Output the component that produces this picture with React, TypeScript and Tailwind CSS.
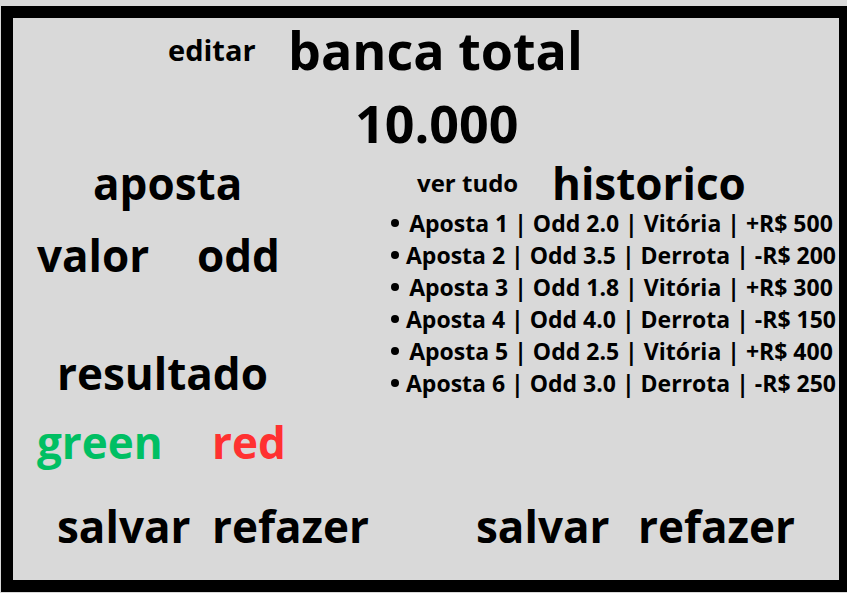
const bets = [
  'Aposta 1 | Odd 2.0 | Vitória | +R$ 500',
  'Aposta 2 | Odd 3.5 | Derrota | -R$ 200',
  'Aposta 3 | Odd 1.8 | Vitória | +R$ 300',
  'Aposta 4 | Odd 4.0 | Derrota | -R$ 150',
  'Aposta 5 | Odd 2.5 | Vitória | +R$ 400',
  'Aposta 6 | Odd 3.0 | Derrota | -R$ 250',
];

export default function App() {
  return (
    <div className="flex min-h-screen flex-col bg-[#d9d9d9] pt-1.5 pb-px pl-px font-['Open_Sans',sans-serif] font-bold text-black">
      <main className="flex flex-1 flex-col border-12 border-r-8 border-black">
        <header className="flex flex-col">
          <div className="flex items-center pl-[155px]">
            <button className="w-[120px] text-left text-[29px] leading-[60px]">editar</button>
            <h1 className="text-[52px] leading-[64px]">banca total</h1>
          </div>
          <p className="pt-1 pl-[342px] text-[52px] leading-[73px]">10.000</p>
        </header>
        <div className="flex">
          <section className="w-[372px] shrink-0">
            <h2 className="pl-20 text-[44px] leading-[48px]">aposta</h2>
            <div className="flex pt-6 pl-6 text-[44px] leading-[48px]">
              <span className="w-40">valor</span>
              <span>odd</span>
            </div>
            <h2 className="pt-[70px] pl-11 text-[44px] leading-[48px]">resultado</h2>
            <div className="flex pt-[21px] pl-6 text-[44px] leading-[48px]">
              <button className="w-[175px] text-left text-[#00bf63]">green</button>
              <button className="text-[#ff3131]">red</button>
            </div>
          </section>
          <section className="min-w-0 flex-1">
            <div className="flex items-center pl-8">
              <button className="w-[135px] text-left text-2xl">ver tudo</button>
              <h2 className="text-[44px] leading-[48px]">historico</h2>
            </div>
            <ul className="text-center text-[23px] leading-8 whitespace-nowrap">
              {bets.map((bet) => (
                <li key={bet} className="flex items-center gap-1">
                  <span aria-hidden="true" className="ml-1.5 size-2 shrink-0 rounded-full bg-black" />
                  <span className="flex-1">{bet}</span>
                </li>
              ))}
            </ul>
          </section>
        </div>
        <footer className="flex pt-9 pl-11 text-[44px] leading-[48px]">
          <button className="w-[155px] text-left">salvar</button>
          <button className="w-[264px] text-left">refazer</button>
          <button className="w-[162px] text-left">salvar</button>
          <button>refazer</button>
        </footer>
      </main>
    </div>
  );
}
